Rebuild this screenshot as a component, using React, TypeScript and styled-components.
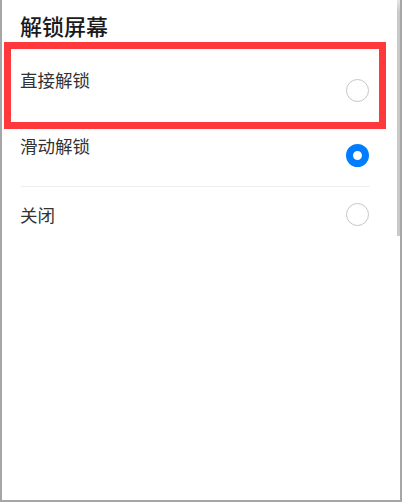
import React from "react";
import styled, { createGlobalStyle } from "styled-components";

const Global = createGlobalStyle`
  html, body { margin: 0; padding: 0; background: #ffffff; }
  body { font-family: "Noto Sans CJK SC", "Noto Sans", sans-serif; }
  * { box-sizing: border-box; }
`;

const Frame = styled.div`
  position: relative;
  width: 402px;
  height: 502px;
  background: #ffffff;
  border-left: 2px solid #a6a6a6;
  border-right: 2px solid #a6a6a6;
  border-bottom: 2px solid #a6a6a6;
  overflow: hidden;
`;

const Title = styled.h1`
  margin: 0;
  padding: 14px 0 0 18px;
  font-size: 22px;
  line-height: 22px;
  font-weight: 500;
  color: #1a1a1a;
`;

const List = styled.div`
  display: flex;
  flex-direction: column;
  margin: 20px 30px 0 18px;
`;

const Row = styled.div<{ $h: number }>`
  display: flex;
  align-items: center;
  justify-content: space-between;
  height: ${(p) => p.$h}px;
`;

const Label = styled.span<{ $lift: number }>`
  font-size: 17.5px;
  line-height: 17.5px;
  color: #333333;
  margin-bottom: ${(p) => p.$lift * 2}px;
`;

const Divider = styled.div`
  height: 1px;
  background: #eeeeee;
  margin-left: 1px;
`;

const Radio = styled.span<{ $on: boolean }>`
  display: block;
  width: 23px;
  height: 23px;
  border-radius: 50%;
  border: ${(p) => (p.$on ? "7px solid #007dff" : "1.5px solid #c6c6c6")};
  margin-right: 1px;
`;

const Highlight = styled.div`
  position: absolute;
  left: 2px;
  top: 42px;
  width: 382px;
  height: 87px;
  border: 7px solid #ff383c;
  pointer-events: none;
`;

const ScrollThumb = styled.div`
  position: absolute;
  right: 0;
  top: 0;
  width: 3px;
  height: 236px;
  background: linear-gradient(#e6e6e6 0px, #c9c9c9 12px, #c9c9c9 100%);
`;

const items = [
  { label: "直接解锁", on: false, h: 69, lift: 10.5 },
  { label: "滑动解锁", on: true, h: 61, lift: 10 },
  { label: "关闭", on: false, h: 55, lift: -0.5 },
];

export default function App() {
  return (
    <>
      <Global />
      <Frame>
        <Title>解锁屏幕</Title>
        <List>
          {items.map((it, i) => (
            <React.Fragment key={it.label}>
              {i === 2 && <Divider />}
              <Row $h={it.h}>
                <Label $lift={it.lift}>{it.label}</Label>
                <Radio $on={it.on} />
              </Row>
            </React.Fragment>
          ))}
        </List>
        <Highlight />
        <ScrollThumb />
      </Frame>
    </>
  );
}
